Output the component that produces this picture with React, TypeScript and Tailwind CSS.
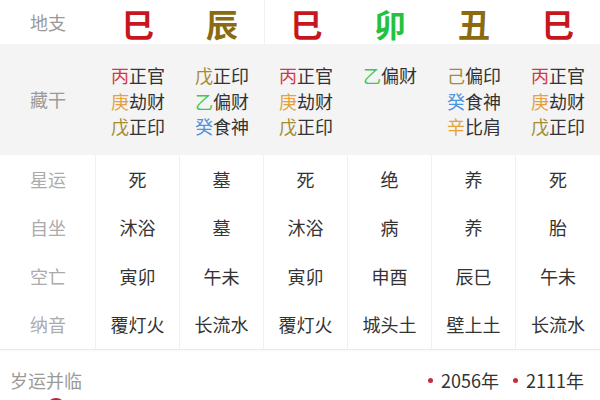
const font = { fontFamily: '"Noto Sans CJK SC", "Noto Sans", sans-serif' };

const BRANCHES = [
  { c: "巳", color: "text-[#c8161e]" },
  { c: "辰", color: "text-[#8a6b12]" },
  { c: "巳", color: "text-[#c8161e]" },
  { c: "卯", color: "text-[#22c23c]" },
  { c: "丑", color: "text-[#8a6b12]" },
  { c: "巳", color: "text-[#c8161e]" },
];

const RED = "text-[#d23a42]";
const ORANGE = "text-[#e3a23a]";
const OLIVE = "text-[#a88b30]";
const GREEN = "text-[#3cc85a]";
const BLUE = "text-[#4c94e0]";

const HIDDEN: [string, string, string][][] = [
  [["丙", RED, "正官"], ["庚", ORANGE, "劫财"], ["戊", OLIVE, "正印"]],
  [["戊", OLIVE, "正印"], ["乙", GREEN, "偏财"], ["癸", BLUE, "食神"]],
  [["丙", RED, "正官"], ["庚", ORANGE, "劫财"], ["戊", OLIVE, "正印"]],
  [["乙", GREEN, "偏财"]],
  [["己", OLIVE, "偏印"], ["癸", BLUE, "食神"], ["辛", ORANGE, "比肩"]],
  [["丙", RED, "正官"], ["庚", ORANGE, "劫财"], ["戊", OLIVE, "正印"]],
];

const ROWS = [
  { label: "星运", items: ["死", "墓", "死", "绝", "养", "死"] },
  { label: "自坐", items: ["沐浴", "墓", "沐浴", "病", "养", "胎"] },
  { label: "空亡", items: ["寅卯", "午未", "寅卯", "申酉", "辰巳", "午未"] },
  { label: "纳音", items: ["覆灯火", "长流水", "覆灯火", "城头土", "壁上土", "长流水"] },
];

export default function App() {
  return (
    <div className="w-[600px] h-[400px] overflow-hidden bg-white" style={font}>
      {/* 地支 */}
      <div className="grid grid-cols-[96px_repeat(6,1fr)] h-[44px] items-start">
        <div className="pl-[30px] h-[44px] leading-[44px] text-[18px] text-[#9a9a9a]">地支</div>
        {BRANCHES.map((b, i) => (
          <div
            key={i}
            className={`h-[44px] flex justify-center items-start ${i === 2 ? "border-l border-[#f0f0f0]" : ""}`}
          >
            <span className={`relative z-10 text-[32px] font-bold leading-[46px] ${b.color}`}>{b.c}</span>
          </div>
        ))}
      </div>

      {/* 藏干 */}
      <div className="grid grid-cols-[96px_repeat(6,1fr)] h-[111px] bg-[#f4f4f4]">
        <div className="flex items-center pl-[30px] text-[18px] text-[#9a9a9a]">藏干</div>
        {HIDDEN.map((col, i) => (
          <div key={i} className="flex flex-col items-center pt-[19px] text-[18px] leading-[25.5px] text-[#333]">
            {col.map(([s, color, god], j) => (
              <div key={j}>
                <span className={color}>{s}</span>
                {god}
              </div>
            ))}
          </div>
        ))}
      </div>

      {/* rows */}
      <div className="border-b border-[#ebebeb] shadow-[0_1px_2px_rgba(0,0,0,0.04)]">
        {ROWS.map((r) => (
          <div key={r.label} className="grid grid-cols-[96px_repeat(6,1fr)] h-[48.5px]">
            <div className="flex items-center pl-[30px] text-[18px] text-[#ababab] border-r border-[#f0f0f0]">{r.label}</div>
            {r.items.map((t, i) => (
              <div
                key={i}
                className={`flex items-center justify-center text-[18px] text-[#333] ${i < 5 ? "border-r border-[#f0f0f0]" : ""}`}
              >
                {t}
              </div>
            ))}
          </div>
        ))}
      </div>

      {/* 岁运并临 */}
      <div className="flex items-start justify-between pl-[10px] pr-[16px] pt-[18px]">
        <div className="flex flex-col">
          <span className="text-[18px] text-[#9a9a9a] leading-[24px]">岁运并临</span>
          <span className="ml-[36px] mt-[6px] w-[20px] h-[20px] rounded-full bg-[#c0222e]" />
        </div>
        <div className="flex items-center gap-[14px] text-[18px] text-[#333] leading-[24px]">
          <span className="flex items-center gap-[8px]">
            <span className="w-[5px] h-[5px] rounded-full bg-[#c0303c]" />
            2056年
          </span>
          <span className="flex items-center gap-[8px]">
            <span className="w-[5px] h-[5px] rounded-full bg-[#c0303c]" />
            2111年
          </span>
        </div>
      </div>
    </div>
  );
}
